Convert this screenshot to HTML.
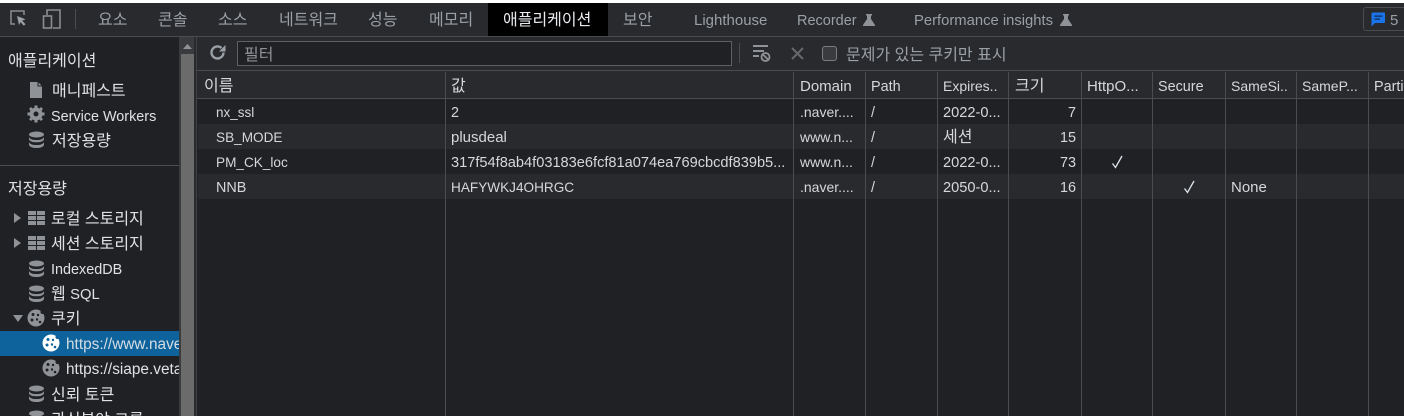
<!DOCTYPE html>
<html><head><meta charset="utf-8">
<style>
html,body{margin:0;padding:0;background:#202124;}
#p{position:relative;width:1404px;height:416px;overflow:hidden;background:#202124;font-family:"Liberation Sans","Noto Sans CJK KR",sans-serif;font-size:14.4px;color:#bdc1c6;}
#p div,#p svg{position:absolute;}
.t{white-space:nowrap;line-height:20px;height:20px;margin-top:1px;}
.k{font-size:16px;margin-top:2px;}
.tab{color:#9aa0a6;top:9px;margin-top:2px;}
.l{color:#dfe1e5;}
.h{top:75px;color:#d5d7da;margin-top:2px;}
.c{color:#d5d7da;}
.v{top:72px;bottom:0;width:1px;background:#4a4c50;}
.r{left:198px;width:1206px;height:25px;}
</style></head><body><div id="p">
<div style="left:0;top:0;width:1404px;height:3px;background:#fff"></div>
<div style="left:0;top:3px;width:1404px;height:33px;background:#292a2d"></div>
<div style="left:0;top:36px;width:1404px;height:1px;background:#4a4c50"></div>
<div style="left:0;top:37px;width:179px;height:379px;background:#202124"></div>

<svg style="left:9px;top:8px" width="20" height="20" viewBox="0 0 20 20"><path d="M6 16H2V3h13v4" fill="none" stroke="#8a8d91" stroke-width="1.500"/><path d="M8 8l8.500 3.200-3.300 1.400 3.300 3.600-1.700 1.500-3.200-3.600L10 17z" fill="#9aa0a6"/></svg>
<svg style="left:41px;top:8px" width="22" height="22" viewBox="0 0 22 22"><path d="M6 7V2h13v18H12" fill="none" stroke="#8a8d91" stroke-width="1.600"/><rect x="2.500" y="8" width="8" height="12" fill="none" stroke="#8a8d91" stroke-width="1.600"/></svg>
<div style="left:75px;top:9px;width:1px;height:20px;background:#4a4c50"></div>

<div class="t tab k" style="left:98px">요소</div>
<div class="t tab k" style="left:158px">콘솔</div>
<div class="t tab k" style="left:218px">소스</div>
<div class="t tab k" style="left:279px">네트워크</div>
<div class="t tab k" style="left:368px">성능</div>
<div class="t tab k" style="left:429px">메모리</div>
<div style="left:488px;top:3px;width:120px;height:33px;background:#000"></div>
<div class="t k" style="left:503px;top:9px;color:#e8eaed">애플리케이션</div>
<div class="t tab k" style="left:623px">보안</div>
<div class="t tab" style="left:694px;font-size:15px">Lighthouse</div>
<div class="t tab" style="left:797px;font-size:14.500px">Recorder</div>
<svg style="left:862px;top:13px" width="14" height="14" viewBox="0 0 14 14"><path d="M4 1h6v1.500H9V6l4 6v1H1v-1l4-6V2.500H4z" fill="#8f9296"/></svg>
<div class="t tab" style="left:914px;font-size:14.800px">Performance insights</div>
<svg style="left:1059px;top:13px" width="14" height="14" viewBox="0 0 14 14"><path d="M4 1h6v1.500H9V6l4 6v1H1v-1l4-6V2.500H4z" fill="#8f9296"/></svg>
<div style="left:1363px;top:7px;width:50px;height:24px;border:1px solid #4a4c50;border-radius:3px;box-sizing:border-box"></div>
<svg style="left:1371px;top:12px" width="15" height="15" viewBox="0 0 15 15"><path d="M1.500 0.500h11.500a1 1 0 0 1 1 1V10a1 1 0 0 1-1 1H4l-3.500 3.500V1.500a1 1 0 0 1 1-1z" fill="#1a73e8"/><path d="M3.500 3.500h8v1.300h-8zM3.500 6.500h5.500v1.300H3.500z" fill="#0e2a52"/></svg>
<div class="t tab" style="left:1390px;top:9px;font-size:15px">5</div>

<!-- sidebar -->
<div class="t l k" style="left:8px;top:50px">애플리케이션</div>
<svg style="left:29px;top:81px" width="14" height="18" viewBox="0 0 14 18"><path d="M1 1h8l4 4v12H1z" fill="#8f9296"/><path d="M9 1v4h4" fill="none" stroke="#202124" stroke-width="1"/></svg>
<div class="t l k" style="left:52px;top:80px">매니페스트</div>
<svg style="left:27px;top:105px" width="18" height="18" viewBox="0 0 18 18"><circle cx="9" cy="9" r="4.500" fill="none" stroke="#8f9296" stroke-width="4"/><path d="M7.500 0.500h3v4h-3zM7.500 13.500h3v4h-3zM0.500 7.500h4v3h-4zM13.500 7.500h4v3h-4zM2 4l2-2 3 3-2 2zM16 4l-2-2-3 3 2 2zM2 14l2 2 3-3-2-2zM16 14l-2 2-3-3 2-2z" fill="#8f9296"/></svg>
<div class="t l" style="left:51px;top:106px">Service Workers</div>
<svg style="left:28px;top:131px" width="17" height="18" viewBox="0 0 17 18"><g fill="#8f9296"><ellipse cx="8.500" cy="3.500" rx="7.500" ry="3"/><path d="M1 6c1 2 3 3 7.500 3S15 8 16 6v2.500c-1 2-3.500 2.800-7.500 2.800S2 10.500 1 8.500zM1 11c1 2 3 3 7.500 3s6.500-1 7.500-3v3c-1 2-3.500 3-7.500 3S2 16 1 14z"/></g></svg>
<div class="t l k" style="left:52px;top:130px">저장용량</div>
<div style="left:0;top:165px;width:179px;height:1px;background:#4a4c50"></div>
<div class="t l k" style="left:8px;top:178px">저장용량</div>

<svg style="left:14px;top:213px" width="8" height="10" viewBox="0 0 8 10"><path d="M0 0l7 5-7 5z" fill="#8f9296"/></svg>
<svg style="left:28px;top:211px" width="17" height="15" viewBox="0 0 17 15"><path d="M0 0h8v4H0zM9 0h8v4H9zM0 5h8v4H0zM9 5h8v4H9zM0 10h8v4H0zM9 10h8v4H9z" fill="#8f9296"/></svg>
<div class="t l k" style="left:51px;top:208px">로컬 스토리지</div>
<svg style="left:14px;top:238px" width="8" height="10" viewBox="0 0 8 10"><path d="M0 0l7 5-7 5z" fill="#8f9296"/></svg>
<svg style="left:28px;top:236px" width="17" height="15" viewBox="0 0 17 15"><path d="M0 0h8v4H0zM9 0h8v4H9zM0 5h8v4H0zM9 5h8v4H9zM0 10h8v4H0zM9 10h8v4H9z" fill="#8f9296"/></svg>
<div class="t l k" style="left:51px;top:233px">세션 스토리지</div>
<svg style="left:28px;top:260px" width="17" height="18" viewBox="0 0 17 18"><g fill="#8f9296"><ellipse cx="8.500" cy="3.500" rx="7.500" ry="3"/><path d="M1 6c1 2 3 3 7.500 3S15 8 16 6v2.500c-1 2-3.500 2.800-7.500 2.800S2 10.500 1 8.500zM1 11c1 2 3 3 7.500 3s6.500-1 7.500-3v3c-1 2-3.500 3-7.500 3S2 16 1 14z"/></g></svg>
<div class="t l" style="left:51px;top:259px">IndexedDB</div>
<svg style="left:28px;top:285px" width="17" height="18" viewBox="0 0 17 18"><g fill="#8f9296"><ellipse cx="8.500" cy="3.500" rx="7.500" ry="3"/><path d="M1 6c1 2 3 3 7.500 3S15 8 16 6v2.500c-1 2-3.500 2.800-7.500 2.800S2 10.500 1 8.500zM1 11c1 2 3 3 7.500 3s6.500-1 7.500-3v3c-1 2-3.500 3-7.500 3S2 16 1 14z"/></g></svg>
<div class="t l k" style="left:51px;top:283px">웹 <span style="font-size:14.800px">SQL</span></div>
<svg style="left:13px;top:315px" width="10" height="8" viewBox="0 0 10 8"><path d="M0 0h10L5 7z" fill="#8f9296"/></svg>
<svg style="left:27px;top:309px" width="18" height="18" viewBox="0 0 18 18"><circle cx="9" cy="9" r="8.500" fill="#8f9296"/><g fill="#202124"><circle cx="6" cy="5.500" r="1.500"/><circle cx="11" cy="6" r="1.200"/><circle cx="5" cy="11" r="1.500"/><circle cx="10" cy="10.500" r="1.200"/><circle cx="13" cy="13" r="1.300"/><circle cx="15.500" cy="3" r="2"/></g></svg>
<div class="t l k" style="left:51px;top:308px">쿠키</div>

<div style="left:0;top:331px;width:179px;height:25px;background:#0e639c"></div>
<svg style="left:42px;top:334px" width="18" height="18" viewBox="0 0 18 18"><circle cx="9" cy="9" r="8.500" fill="#fff"/><g fill="#0e639c"><circle cx="6" cy="5.500" r="1.500"/><circle cx="11" cy="6" r="1.200"/><circle cx="5" cy="11" r="1.500"/><circle cx="10" cy="10.500" r="1.200"/><circle cx="13" cy="13" r="1.300"/><circle cx="15.500" cy="3" r="2"/></g></svg>
<div class="t" style="left:66px;top:334px;width:113px;overflow:hidden;color:#d5dde3;font-size:15.400px">https://www.naver.com</div>
<svg style="left:42px;top:359px" width="18" height="18" viewBox="0 0 18 18"><circle cx="9" cy="9" r="8.500" fill="#8f9296"/><g fill="#202124"><circle cx="6" cy="5.500" r="1.500"/><circle cx="11" cy="6" r="1.200"/><circle cx="5" cy="11" r="1.500"/><circle cx="10" cy="10.500" r="1.200"/><circle cx="13" cy="13" r="1.300"/><circle cx="15.500" cy="3" r="2"/></g></svg>
<div class="t l" style="left:66px;top:359px;width:113px;overflow:hidden;font-size:15.400px">https://siape.veta.naver</div>
<svg style="left:28px;top:385px" width="17" height="18" viewBox="0 0 17 18"><g fill="#8f9296"><ellipse cx="8.500" cy="3.500" rx="7.500" ry="3"/><path d="M1 6c1 2 3 3 7.500 3S15 8 16 6v2.500c-1 2-3.500 2.800-7.500 2.800S2 10.500 1 8.500zM1 11c1 2 3 3 7.500 3s6.500-1 7.500-3v3c-1 2-3.500 3-7.500 3S2 16 1 14z"/></g></svg>
<div class="t l k" style="left:51px;top:384px">신뢰 토큰</div>
<svg style="left:28px;top:410px" width="17" height="18" viewBox="0 0 17 18"><g fill="#8f9296"><ellipse cx="8.500" cy="3.500" rx="7.500" ry="3"/></g></svg>
<div class="t l k" style="left:51px;top:409px">관심분야 그룹</div>

<!-- scrollbar -->
<div style="left:179px;top:37px;width:15px;height:379px;background:#3a3b3e"></div>
<div style="left:181px;top:54px;width:13px;height:362px;background:#6b6b6b"></div>
<svg style="left:183px;top:44px" width="9" height="6" viewBox="0 0 9 6"><path d="M0 5L4.500 0 9 5z" fill="#8f9296"/></svg>
<div style="left:194px;top:37px;width:3px;height:379px;background:#292a2d"></div>
<div style="left:196px;top:37px;width:1px;height:379px;background:#3f4043"></div>

<!-- toolbar -->
<div style="left:197px;top:37px;width:1207px;height:33px;background:#292a2d"></div>
<div style="left:197px;top:70px;width:1207px;height:1px;background:#4a4c50"></div>
<svg style="left:209px;top:44px" width="18" height="18" viewBox="0 0 18 18"><path d="M14.500 8.500A6 6 0 1 1 12.500 4" fill="none" stroke="#9aa0a6" stroke-width="2.400"/><path d="M10 7.500h6.500V1z" fill="#9aa0a6"/></svg>
<div style="left:237px;top:41px;width:495px;height:25px;box-sizing:border-box;border:1px solid #5f6063;background:#202124"></div>
<div class="t k" style="left:244px;top:44px;color:#8f9296">필터</div>
<div style="left:739px;top:43px;width:1px;height:20px;background:#4a4c50"></div>
<svg style="left:752px;top:43px" width="22" height="20" viewBox="0 0 22 20"><path d="M1 2h15v2H1zM1 7h11v2H1zM1 12h6v2H1z" fill="#8f9296"/><circle cx="13.500" cy="14" r="4" fill="none" stroke="#8f9296" stroke-width="1.800"/><path d="M10.500 11l6 6" stroke="#8f9296" stroke-width="1.800"/></svg>
<svg style="left:791px;top:47px" width="13" height="13" viewBox="0 0 13 13"><path d="M1 1l11 11M12 1L1 12" stroke="#66686b" stroke-width="2"/></svg>
<div style="left:822px;top:46px;width:15px;height:15px;box-sizing:border-box;border:1px solid #7a7c7f;border-radius:3px;background:#3a3b3e"></div>
<div class="t k" style="left:846px;top:44px;color:#9aa0a6">문제가 있는 쿠키만 표시</div>

<!-- table -->
<div style="left:197px;top:71px;width:1207px;height:28px;background:#292a2d"></div>
<div style="left:197px;top:98px;width:1207px;height:1px;background:#4a4c50"></div>
<div class="r" style="top:99px;background:#202124"></div>
<div class="r" style="top:124px;background:#292a2d"></div>
<div class="r" style="top:149px;background:#202124"></div>
<div class="r" style="top:174px;background:#292a2d"></div>
<div class="v" style="left:445px"></div><div class="v" style="left:793px"></div><div class="v" style="left:865px"></div><div class="v" style="left:937px"></div><div class="v" style="left:1008px"></div><div class="v" style="left:1081px"></div><div class="v" style="left:1152px"></div><div class="v" style="left:1225px"></div><div class="v" style="left:1296px"></div><div class="v" style="left:1368px"></div>

<div class="t h k" style="left:204px">이름</div>
<div class="t h k" style="left:451px">값</div>
<div class="t h" style="left:800px;font-size:15px">Domain</div>
<div class="t h" style="left:871px">Path</div>
<div class="t h" style="left:943px;font-size:14px;margin-top:1px">Expires..</div>
<div class="t h k" style="left:1015px">크기</div>
<div class="t h" style="left:1087px;font-size:15px">HttpO...</div>
<div class="t h" style="left:1158px">Secure</div>
<div class="t h" style="left:1231px;font-size:14px;margin-top:1px">SameSi..</div>
<div class="t h" style="left:1302px;font-size:14px;margin-top:1px">SameP...</div>
<div class="t h" style="left:1374px;width:30px;overflow:hidden">Partition</div>

<div class="t c" style="left:216px;top:102px;font-size:13.500px">nx_ssl</div>
<div class="t c" style="left:451px;top:102px">2</div>
<div class="t c" style="left:800px;top:102px;font-size:14px;margin-top:0">.naver....</div>
<div class="t c" style="left:871px;top:102px">/</div>
<div class="t c" style="left:943px;top:102px;font-size:14.600px">2022-0...</div>
<div class="t c" style="left:1040px;width:36px;text-align:right;top:102px">7</div>

<div class="t c" style="left:216px;top:127px;font-size:13.600px">SB_MODE</div>
<div class="t c" style="left:451px;top:127px;font-size:15px">plusdeal</div>
<div class="t c" style="left:800px;top:127px;font-size:14px;margin-top:0">www.n...</div>
<div class="t c" style="left:871px;top:127px">/</div>
<div class="t c k" style="left:943px;top:126px">세션</div>
<div class="t c" style="left:1040px;width:36px;text-align:right;top:127px">15</div>

<div class="t c" style="left:216px;top:152px;font-size:13.600px">PM_CK_loc</div>
<div class="t c" style="left:451px;top:152px;width:338px;overflow:hidden;font-size:14.600px">317f54f8ab4f03183e6fcf81a074ea769cbcdf839b5...</div>
<div class="t c" style="left:800px;top:152px;font-size:14px;margin-top:0">www.n...</div>
<div class="t c" style="left:871px;top:152px">/</div>
<div class="t c" style="left:943px;top:152px;font-size:14.600px">2022-0...</div>
<div class="t c" style="left:1040px;width:36px;text-align:right;top:152px">73</div>
<svg style="left:1111px;top:155px" width="13" height="14" viewBox="0 0 13 14"><path d="M1.500 8.500L4.500 12.500 11 1" fill="none" stroke="#dfe6f0" stroke-width="1.300"/></svg>

<div class="t c" style="left:216px;top:177px">NNB</div>
<div class="t c" style="left:451px;top:177px;font-size:13.600px">HAFYWKJ4OHRGC</div>
<div class="t c" style="left:800px;top:177px;font-size:14px;margin-top:0">.naver....</div>
<div class="t c" style="left:871px;top:177px">/</div>
<div class="t c" style="left:943px;top:177px;font-size:14.600px">2050-0...</div>
<div class="t c" style="left:1040px;width:36px;text-align:right;top:177px">16</div>
<svg style="left:1183px;top:180px" width="13" height="14" viewBox="0 0 13 14"><path d="M1.500 8.500L4.500 12.500 11 1" fill="none" stroke="#dfe6f0" stroke-width="1.300"/></svg>
<div class="t c" style="left:1231px;top:177px;font-size:15px">None</div>
</div></body></html>
